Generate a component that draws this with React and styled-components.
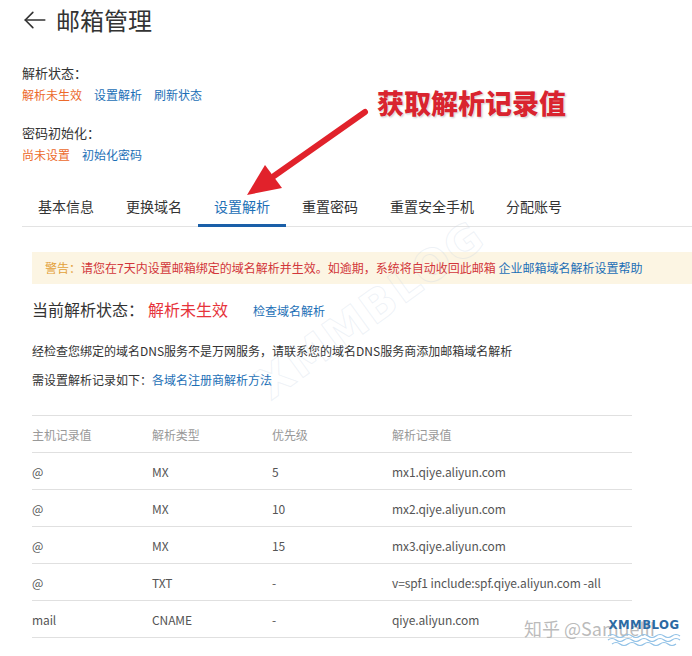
import styled, { createGlobalStyle } from "styled-components";

const GlobalStyle = createGlobalStyle`
  html, body {
    margin: 0;
    padding: 0;
    background: #fff;
  }
  body {
    font-family: "Noto Sans CJK SC", "Noto Sans", sans-serif;
    color: #333;
    overflow: hidden;
  }
`;

const Page = styled.div`
  position: relative;
  width: 692px;
  height: 656px;
  padding-left: 22px;
  box-sizing: border-box;
  overflow: hidden;
`;

const TitleBar = styled.div`
  display: flex;
  align-items: center;
  gap: 8px;
  height: 40px;
`;

const Title = styled.h1`
  margin: 0;
  font-size: 24px;
  font-weight: 400;
  color: #333;
  line-height: 40px;
`;

const Label = styled.div`
  font-size: 13px;
  line-height: 22px;
  color: #333;
  margin-top: ${({ $top }) => $top || 0}px;
`;

const LinkRow = styled.div`
  display: flex;
  gap: 12px;
  font-size: 12px;
  line-height: 22px;
`;

const Text = styled.span`
  color: ${({ $tone }) =>
    $tone === "orange"
      ? "#ec6a2c"
      : $tone === "blue"
      ? "#1c6fb6"
      : $tone === "red"
      ? "#e6343b"
      : $tone === "warn"
      ? "#d2363a"
      : $tone === "amber"
      ? "#e3a13a"
      : "#333"};
`;

const Tabs = styled.div`
  display: flex;
  margin-top: 21px;
  border-bottom: 1px solid #e3e3e3;
`;

const Tab = styled.div`
  padding: 0 16px;
  height: 40px;
  line-height: 38px;
  font-size: 14px;
  box-sizing: border-box;
  color: ${({ $active }) => ($active ? "#1c6fb6" : "#333")};
  border-bottom: 3px solid ${({ $active }) => ($active ? "#1a5fa8" : "transparent")};
  margin-bottom: -1px;
`;

const Panel = styled.div`
  padding-left: 10px;
`;

const Warning = styled.div`
  margin-top: 25px;
  height: 32px;
  line-height: 32px;
  padding-left: 13px;
  background: #fcf5e3;
  font-size: 12px;
  white-space: nowrap;
`;

const StatusLine = styled.div`
  display: flex;
  align-items: center;
  margin-top: 13px;
  height: 24px;
  font-size: 16px;
`;

const StatusValue = styled(Text)`
  margin-left: 4px;
`;

const SmallLink = styled.span`
  font-size: 12px;
  color: #1c6fb6;
  margin-left: 25px;
  margin-top: 2px;
`;

const Para = styled.div`
  font-size: 12px;
  line-height: 20px;
  color: #333;
  margin-top: ${({ $top }) => $top}px;
`;

const Table = styled.div`
  width: 600px;
  margin-top: 25px;
  border-top: 1px solid #e0e0e0;
  font-size: 12px;
`;

const Row = styled.div`
  display: grid;
  grid-template-columns: 120px 120px 120px 240px;
  height: 37px;
  align-items: center;
  border-bottom: 1px solid #e0e0e0;
  box-sizing: border-box;
  color: ${({ $head }) => ($head ? "#999" : "#555")};
`;

const Cell = styled.div`
  white-space: nowrap;
  letter-spacing: -0.1px;
`;

const Overlay = styled.svg`
  position: absolute;
  left: 0;
  top: 0;
  pointer-events: none;
`;

const Callout = styled.div`
  position: absolute;
  left: 377px;
  top: 83px;
  font-size: 27px;
  font-weight: 900;
  color: #d9242f;
  white-space: nowrap;
  text-shadow: 0 0 2px #fff, 1px 1px 2px rgba(0, 0, 0, 0.25);
`;

const Stamp = styled.div`
  position: absolute;
  left: 524px;
  top: 615px;
  font-size: 18px;
  color: rgba(175, 175, 175, 0.85);
  white-space: nowrap;
`;

const Diagonal = styled.div`
  position: absolute;
  left: 236px;
  top: 284px;
  font-family: "DejaVu Sans", sans-serif;
  font-size: 44px;
  font-weight: 700;
  color: transparent;
  -webkit-text-stroke: 1px rgba(195, 208, 226, 0.28);
  transform: rotate(-36deg);
  letter-spacing: 2px;
  white-space: nowrap;
`;

const Logo = styled.div`
  position: absolute;
  left: 606px;
  top: 618px;
  display: flex;
  flex-direction: column;
  align-items: center;
`;

const LogoText = styled.span`
  font-family: "DejaVu Sans Condensed", "DejaVu Sans", sans-serif;
  font-size: 13px;
  font-weight: 700;
  letter-spacing: 0.5px;
  color: #2c6aa3;
  line-height: 14px;
`;

const records = [
  ["@", "MX", "5", "mx1.qiye.aliyun.com"],
  ["@", "MX", "10", "mx2.qiye.aliyun.com"],
  ["@", "MX", "15", "mx3.qiye.aliyun.com"],
  ["@", "TXT", "-", "v=spf1 include:spf.qiye.aliyun.com -all"],
  ["mail", "CNAME", "-", "qiye.aliyun.com"],
];

const tabs = ["基本信息", "更换域名", "设置解析", "重置密码", "重置安全手机", "分配账号"];

export default function App() {
  return (
    <>
      <GlobalStyle />
      <Page>
        <TitleBar>
          <svg width="26" height="26" viewBox="0 0 24 24" fill="none" stroke="#333" strokeWidth="1.5" strokeLinecap="round" strokeLinejoin="round">
            <path d="M21 12H3" />
            <path d="M10 5l-7 7 7 7" />
          </svg>
          <Title>邮箱管理</Title>
        </TitleBar>

        <Label $top={22}>解析状态：</Label>
        <LinkRow>
          <Text $tone="orange">解析未生效</Text>
          <Text $tone="blue">设置解析</Text>
          <Text $tone="blue">刷新状态</Text>
        </LinkRow>

        <Label $top={16}>密码初始化：</Label>
        <LinkRow>
          <Text $tone="orange">尚未设置</Text>
          <Text $tone="blue">初始化密码</Text>
        </LinkRow>

        <Tabs>
          {tabs.map((t) => (
            <Tab key={t} $active={t === "设置解析"}>
              {t}
            </Tab>
          ))}
        </Tabs>

        <Panel>
          <Warning>
            <Text $tone="amber">警告：</Text>
            <Text $tone="warn">
              请您在7天内设置邮箱绑定的域名解析并生效。如逾期，系统将自动收回此邮箱
            </Text>{" "}
            <Text $tone="blue">企业邮箱域名解析设置帮助</Text>
          </Warning>

          <StatusLine>
            <span>当前解析状态：</span>
            <StatusValue $tone="red">解析未生效</StatusValue>
            <SmallLink>检查域名解析</SmallLink>
          </StatusLine>

          <Para $top={20}>
            经检查您绑定的域名DNS服务不是万网服务，请联系您的域名DNS服务商添加邮箱域名解析
          </Para>
          <Para $top={9}>
            需设置解析记录如下：<Text $tone="blue">各域名注册商解析方法</Text>
          </Para>

          <Table>
            <Row $head>
              <Cell>主机记录值</Cell>
              <Cell>解析类型</Cell>
              <Cell>优先级</Cell>
              <Cell>解析记录值</Cell>
            </Row>
            {records.map((r, i) => (
              <Row key={i}>
                {r.map((c, j) => (
                  <Cell key={j}>{c}</Cell>
                ))}
              </Row>
            ))}
          </Table>
        </Panel>

        <Diagonal>XMMBLOG</Diagonal>

        <Overlay width="692" height="656" viewBox="0 0 692 656">
          <line x1="365" y1="112" x2="274" y2="176" stroke="#e1222b" strokeWidth="6" strokeLinecap="round" />
          <polygon points="247,195 265,165 282,188" fill="#e1222b" />
        </Overlay>
        <Callout>获取解析记录值</Callout>

        <Stamp>知乎 @SamuelII</Stamp>
        <Logo>
          <LogoText>XMMBLOG</LogoText>
          <svg width="76" height="16" viewBox="0 0 76 16" fill="none" stroke="#8fc0e6" strokeWidth="1.2">
            <path d="M2 4 q4 -3 8 0 t8 0 t8 0 t8 0 t8 0 t8 0 t8 0 t8 0 t8 0" />
            <path d="M2 8 q4 -3 8 0 t8 0 t8 0 t8 0 t8 0 t8 0 t8 0 t8 0 t8 0" />
            <path d="M6 12 q4 -3 8 0 t8 0 t8 0 t8 0 t8 0 t8 0 t8 0 t8 0" />
          </svg>
        </Logo>
      </Page>
    </>
  );
}
